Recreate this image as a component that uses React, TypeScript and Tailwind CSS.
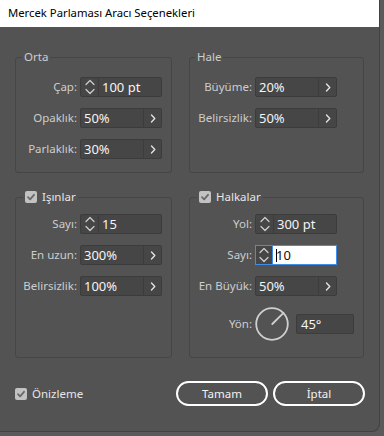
import React from "react";

function SpinIcon() {
  return (
    <svg width="10" height="18" viewBox="0 0 10 18" fill="none" stroke="#d0d0d0" strokeWidth="1.2" strokeLinecap="round" strokeLinejoin="round">
      <path d="M1 6.5 L5 2.5 L9 6.5" />
      <path d="M1 11.5 L5 15.5 L9 11.5" />
    </svg>
  );
}

function Chevron() {
  return (
    <svg width="6" height="9" viewBox="0 0 6 9" fill="none" stroke="#e0e0e0" strokeWidth="1.4" strokeLinecap="round" strokeLinejoin="round">
      <path d="M1.5 1 L4.8 4.5 L1.5 8" />
    </svg>
  );
}

function Check() {
  return (
    <span className="w-[12px] h-[12px] rounded-[2px] bg-[#c2c2c2] flex items-center justify-center">
      <svg width="10" height="10" viewBox="0 0 10 10" fill="none" stroke="#6a6a6a" strokeWidth="1.8" strokeLinecap="round" strokeLinejoin="round">
        <path d="M2 5.2 L4.1 7.3 L8 2.8" />
      </svg>
    </span>
  );
}

function SpinField({ value }: { value: string }) {
  return (
    <div className="flex h-[20px] w-[82px] border border-[#3c3c3c] bg-[#464646] rounded-[2px]">
      <div className="w-[18px] flex items-center justify-center border-r border-[#3c3c3c]">
        <SpinIcon />
      </div>
      <div className="pl-[3px] leading-[18px] text-[13px] text-[#f4f4f4]">{value}</div>
    </div>
  );
}

function ArrowField({ value }: { value: string }) {
  return (
    <div className="flex h-[20px] w-[82px] border border-[#3c3c3c] bg-[#464646] rounded-[2px]">
      <div className="flex-1 pl-[3px] leading-[18px] text-[13px] text-[#f4f4f4]">{value}</div>
      <div className="w-[18px] flex items-center justify-center border-l border-[#3c3c3c]">
        <Chevron />
      </div>
    </div>
  );
}

function FocusField({ value }: { value: string }) {
  return (
    <div className="flex h-[20px] w-[82px] border border-[#3f8fe9]">
      <div className="w-[17px] flex items-center justify-center border-r border-[#3f8fe9] bg-[#464646]">
        <SpinIcon />
      </div>
      <div className="flex-1 bg-white flex items-center pl-[3px] text-[#111]">
        <span className="w-px h-[13px] bg-black -mr-px" />
        <span className="leading-[18px] text-[13px]">{value}</span>
      </div>
    </div>
  );
}

function Row({ label, w, children }: { label: string; w: string; children: React.ReactNode }) {
  return (
    <div className="flex items-center">
      <div className={`${w} mr-[3px] text-right text-[#cdcdcd] leading-[20px]`}>{label}</div>
      {children}
    </div>
  );
}

export default function App() {
  return (
    <div className="w-[384px] h-[436px] bg-[#5a5a5a] text-[11.5px] font-['Noto_Sans',sans-serif]">
      <div className="w-[380px] h-[432px] bg-[#535353] border-r border-b border-[#424242] rounded-br-[8px] flex flex-col overflow-hidden">
        <div className="h-[27px] bg-white flex items-center pl-[8px] text-black text-[11.3px]">
          Mercek Parlaması Aracı Seçenekleri
        </div>
        <div className="grid grid-cols-[157px_175px] gap-x-[17px] gap-y-[16px] pl-[15px] pt-[22px]">
          <fieldset className="border border-[#464646] rounded-[3px] h-[124px]">
            <legend className="ml-[6px] px-[2px] leading-[16px] text-[#cdcdcd]">Orta</legend>
            <div className="flex flex-col gap-[11px] pt-[12px]">
              <Row label="Çap:" w="w-[61px]"><SpinField value="100 pt" /></Row>
              <Row label="Opaklık:" w="w-[61px]"><ArrowField value="50%" /></Row>
              <Row label="Parlaklık:" w="w-[61px]"><ArrowField value="30%" /></Row>
            </div>
          </fieldset>
          <fieldset className="border border-[#464646] rounded-[3px] h-[124px]">
            <legend className="ml-[5px] px-[2px] leading-[16px] text-[#cdcdcd]">Hale</legend>
            <div className="flex flex-col gap-[11px] pt-[12px]">
              <Row label="Büyüme:" w="w-[62px]"><ArrowField value="20%" /></Row>
              <Row label="Belirsizlik:" w="w-[62px]"><ArrowField value="50%" /></Row>
            </div>
          </fieldset>
          <fieldset className="border border-[#464646] rounded-[3px] h-[169px]">
            <legend className="ml-[7px] px-[2px] leading-[16px] text-[#e6e6e6]">
              <span className="flex items-center gap-[5px]">
                <Check />
                Işınlar
              </span>
            </legend>
            <div className="flex flex-col gap-[11px] pt-[9px]">
              <Row label="Sayı:" w="w-[61px]"><SpinField value="15" /></Row>
              <Row label="En uzun:" w="w-[61px]"><ArrowField value="300%" /></Row>
              <Row label="Belirsizlik:" w="w-[61px]"><ArrowField value="100%" /></Row>
            </div>
          </fieldset>
          <fieldset className="border border-[#464646] rounded-[3px] h-[169px]">
            <legend className="ml-[7px] px-[2px] leading-[16px] text-[#e6e6e6]">
              <span className="flex items-center gap-[5px]">
                <Check />
                Halkalar
              </span>
            </legend>
            <div className="flex flex-col gap-[11px] pt-[9px]">
              <Row label="Yol:" w="w-[62px]"><SpinField value="300 pt" /></Row>
              <Row label="Sayı:" w="w-[62px]"><FocusField value="10" /></Row>
              <Row label="En Büyük:" w="w-[62px]"><ArrowField value="50%" /></Row>
              <div className="flex items-center">
                <div className="w-[62px] mr-[3px] text-right text-[#cdcdcd]">Yön:</div>
                <svg width="34" height="34" viewBox="0 0 34 34" fill="none" stroke="#cfcfcf" strokeWidth="1.8">
                  <circle cx="17" cy="17" r="15.8" />
                  <path d="M17.3 17 L28.5 5.8" strokeLinecap="round" />
                </svg>
                <div className="ml-[7px] h-[20px] w-[58px] border border-[#3c3c3c] bg-[#464646] rounded-[2px] pl-[4px] leading-[18px] text-[13px] text-[#f4f4f4]">
                  45°
                </div>
              </div>
            </div>
          </fieldset>
        </div>
        <div className="flex items-center h-[25px] mt-[23px] pl-[15px] pr-[14px]">
          <Check />
          <span className="ml-[5px] text-[#e6e6e6]">Önizleme</span>
          <div className="ml-auto flex gap-[5px]">
            <button className="w-[92px] h-[25px] rounded-full border-2 border-white text-[#f2f2f2] leading-[21px]">Tamam</button>
            <button className="w-[92px] h-[25px] rounded-full border-2 border-white text-[#f2f2f2] leading-[21px]">İptal</button>
          </div>
        </div>
      </div>
    </div>
  );
}
